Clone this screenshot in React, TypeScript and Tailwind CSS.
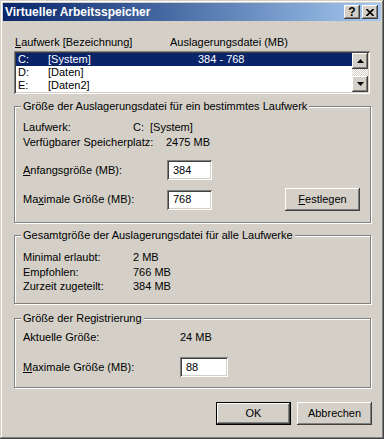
import React from "react";

const raised =
  "shadow-[inset_-1px_-1px_#404040,inset_1px_1px_#ffffff,inset_-2px_-2px_#808080,inset_2px_2px_#d4d0c8]";
const sunken =
  "shadow-[inset_1px_1px_#808080,inset_-1px_-1px_#ffffff,inset_2px_2px_#404040,inset_-2px_-2px_#d4d0c8]";

const Group = ({ title, className, children }: { title: string; className?: string; children?: React.ReactNode }) => (
  <div className={`relative w-[357px] border border-[#808080] shadow-[1px_1px_0_#ffffff,inset_1px_1px_0_#ffffff] ${className ?? ""}`}>
    <span className="absolute left-[6px] top-[-7px] bg-[#d4d0c8] px-[2px] leading-[13px] whitespace-nowrap">{title}</span>
    {children}
  </div>
);

const Field = ({ value, w }: { value: string; w: string }) => (
  <div className={`flex h-[20px] items-center bg-white pl-[6px] ${w} ${sunken}`}>{value}</div>
);

const Button = ({ children, primary }: { children: React.ReactNode; primary?: boolean }) =>
  primary ? (
    <div className="h-[23px] w-[75px] border border-black">
      <div className={`flex h-full w-full items-center justify-center ${raised}`}>{children}</div>
    </div>
  ) : (
    <div className={`flex h-[23px] w-[75px] items-center justify-center ${raised}`}>{children}</div>
  );

const Arrow = ({ up }: { up?: boolean }) => (
  <div className={`flex h-[16px] w-[16px] items-center justify-center bg-[#d4d0c8] ${raised}`}>
    <svg width="7" height="4" viewBox="0 0 7 4">
      <polygon points={up ? "3.5,0 7,4 0,4" : "0,0 7,0 3.5,4"} fill="#000" />
    </svg>
  </div>
);

const rows = [
  { d: "C:", n: "[System]", s: "384 - 768", sel: true },
  { d: "D:", n: "[Daten]", s: "" },
  { d: "E:", n: "[Daten2]", s: "" },
];

export default function App() {
  return (
    <div className="h-[439px] w-[384px] bg-[#d4d0c8] p-[3px] font-['Liberation_Sans',Arial,sans-serif] text-[11px] leading-[13px] text-black shadow-[inset_-1px_-1px_#404040,inset_1px_1px_#d4d0c8,inset_-2px_-2px_#808080,inset_2px_2px_#ffffff]">
      {/* TITLE BAR */}
      <div className="flex h-[18px] items-center justify-between bg-gradient-to-r from-[#0a246a] to-[#a6caf0] pl-[2px] pr-[3px]">
        <span className="text-[12px] font-bold text-white">Virtueller Arbeitsspeicher</span>
        <div className="flex gap-[2px]">
          <div className={`flex h-[14px] w-[16px] items-center justify-center bg-[#d4d0c8] text-[12px] font-bold leading-none ${raised}`}>?</div>
          <div className={`flex h-[14px] w-[16px] items-center justify-center bg-[#d4d0c8] ${raised}`}>
            <svg width="8" height="7" viewBox="0 0 8 7">
              <path d="M0.5 0 L7.5 7 M7.5 0 L0.5 7" stroke="#000" strokeWidth="1.6" />
            </svg>
          </div>
        </div>
      </div>

      <div className="pl-[11px] pr-[9px]">
        {/* LIST */}
        <div className="mt-[15px] flex">
          <span className="ml-[1px] w-[155px]">
            <u>L</u>aufwerk [Bezeichnung]
          </span>
          <span>Auslagerungsdatei (MB)</span>
        </div>
        <div className={`mt-[2px] flex h-[43px] w-[356px] bg-white p-[2px] ${sunken}`}>
          <div className="flex-1">
            {rows.map((r) => (
              <div key={r.d} className={`flex h-[13px] pl-[2px] ${r.sel ? "bg-[#0a246a] text-white" : ""}`}>
                <span className="w-[30px]">{r.d}</span>
                <span className="w-[150px]">{r.n}</span>
                <span>{r.s}</span>
              </div>
            ))}
          </div>
          <div className="flex w-[16px] flex-col">
            <Arrow up />
            <div className="flex-1 bg-[repeating-conic-gradient(#ffffff_0_25%,#d4d0c8_0_50%)] bg-[length:2px_2px]" />
            <Arrow />
          </div>
        </div>

        {/* DRIVE */}
        <Group title="Größe der Auslagerungsdatei für ein bestimmtes Laufwerk" className="mt-[12px] h-[117px]">
          <div className="pl-[8px] pt-[13px] leading-[15px]">
            <div className="flex">
              <span className="w-[110px]">Laufwerk:</span>
              <span className="w-[17px]">C:</span>
              <span>[System]</span>
            </div>
            <div className="flex">
              <span className="w-[143px]">Verfügbarer Speicherplatz:</span>
              <span>2475 MB</span>
            </div>
            <div className="mt-[10px] flex h-[20px] items-center">
              <span className="w-[144px]">
                <u>A</u>nfangsgröße (MB):
              </span>
              <Field value="384" w="w-[45px]" />
            </div>
            <div className="mt-[8px] flex h-[23px] items-center">
              <span className="w-[144px]">
                Ma<u>x</u>imale Größe (MB):
              </span>
              <Field value="768" w="w-[45px]" />
              <div className="ml-[73px]">
                <Button>
                  <span>
                    <u>F</u>estlegen
                  </span>
                </Button>
              </div>
            </div>
          </div>
        </Group>

        {/* TOTAL */}
        <Group title="Gesamtgröße der Auslagerungsdatei für alle Laufwerke" className="mt-[12px] h-[69px]">
          <div className="pl-[8px] pt-[14px] leading-[14.5px]">
            {[
              ["Minimal erlaubt:", "2 MB"],
              ["Empfohlen:", "766 MB"],
              ["Zurzeit zugeteilt:", "384 MB"],
            ].map(([k, v]) => (
              <div key={k} className="flex">
                <span className="w-[110px]">{k}</span>
                <span>{v}</span>
              </div>
            ))}
          </div>
        </Group>

        {/* REGISTRY */}
        <Group title="Größe der Registrierung" className="mt-[14px] h-[70px]">
          <div className="pl-[8px] pt-[11px] leading-[15px]">
            <div className="flex">
              <span className="w-[157px]">Aktuelle Größe:</span>
              <span>24 MB</span>
            </div>
            <div className="mt-[12px] flex h-[20px] items-center">
              <span className="w-[157px]">
                <u>M</u>aximale Größe (MB):
              </span>
              <Field value="88" w="w-[48px]" />
            </div>
          </div>
        </Group>

        <div className="mt-[14px] flex justify-end gap-[6px]">
          <Button primary>OK</Button>
          <Button>Abbrechen</Button>
        </div>
      </div>
    </div>
  );
}
